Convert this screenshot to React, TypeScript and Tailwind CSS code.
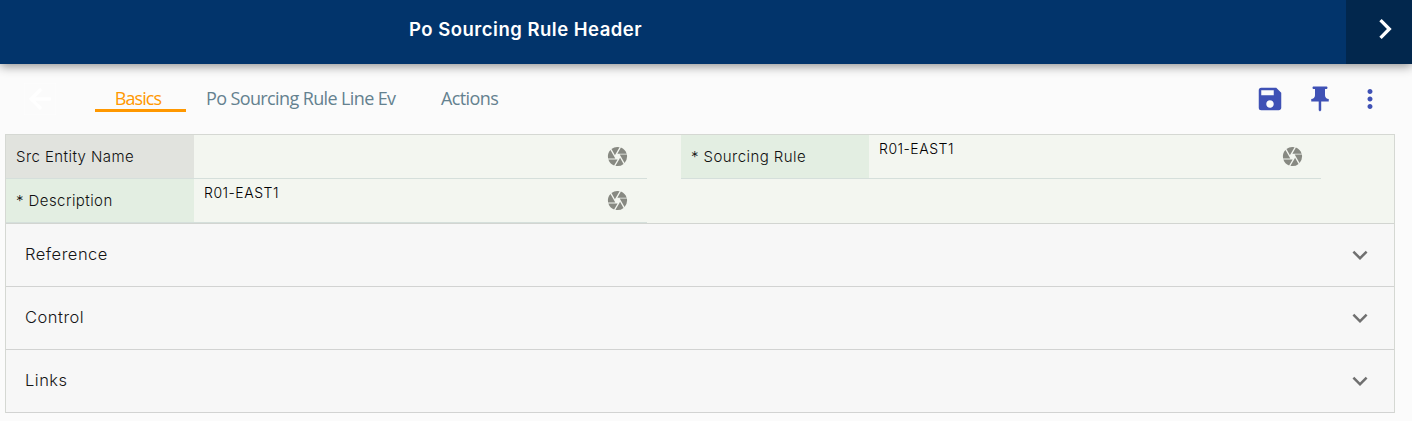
import { MdArrowBack, MdCamera, MdChevronRight, MdExpandMore, MdMoreVert, MdPushPin, MdSave } from "react-icons/md";

type FieldProps = { label: string; value?: string; muted?: boolean; width: string; iconInset?: string };

function Field({ label, value, muted, width, iconInset = "pr-[18px]" }: FieldProps) {
  return (
    <div className={`flex h-11 border-b border-[#d5dfdb] ${width}`}>
      <div
        className={`flex w-[188px] shrink-0 items-center pt-[2px] pl-[10px] text-[15px] font-light tracking-[0.43px] text-[#101010] ${
          muted ? "bg-[#e1e3de]" : "bg-[#e3eee2]"
        }`}
      >
        {label}
      </div>
      <div className={`flex flex-1 items-center justify-between pl-[10px] ${iconInset}`}>
        <span className="mb-4 text-[14px] font-[350] tracking-[0.5px] text-black">{value}</span>
        <MdCamera className="size-[23px] text-[#878982]" />
      </div>
    </div>
  );
}

function Section({ title }: { title: string }) {
  return (
    <div className="flex h-[63px] items-center justify-between border-b border-[#d2d3d2] bg-[#f7f7f7] pr-[19px] pl-[19px]">
      <span className="pb-[2px] text-[16.5px] font-light tracking-[0.5px] text-[#151515]">{title}</span>
      <MdExpandMore className="size-[30px] text-[#707070]" />
    </div>
  );
}

export default function App() {
  return (
    <div className="h-[421px] w-[1412px] overflow-hidden bg-[#fbfbfb] font-['Inter',sans-serif]">
      <header className="relative flex h-16 bg-[#02346b] shadow-[0_2px_10px_rgba(0,0,0,0.45)]">
        <h1 className="flex w-[1346px] items-center pb-[5px] pl-[409px] text-[18.5px] font-semibold tracking-[0.5px] text-white">
          Po Sourcing Rule Header
        </h1>
        <button className="flex w-[66px] items-center bg-[#02274d] pb-[6px] pl-[19px] text-white">
          <MdChevronRight className="size-[40px]" />
        </button>
      </header>
      <nav className="flex h-[70px] items-center font-['Open_Sans',sans-serif] text-[18px] tracking-[-0.6px] text-[#64818f]">
        <MdArrowBack className="ml-[24px] size-[32px] stroke-white stroke-[0.6] text-white" />
        <div className="mb-px ml-[39px] flex h-[27px] w-[91px] justify-center border-b-[3px] border-[#ff9800] leading-[26px] text-[#ff9800]">
          <span className="mr-[8px] ml-[3px] tracking-[-0.95px]">Basics</span>
        </div>
        <span className="mb-px ml-5 w-[235px] tracking-[-0.62px]">Po Sourcing Rule Line Ev</span>
        <span className="mb-px">Actions</span>
        <div className="mr-[27px] ml-auto flex gap-5 text-[#3f51b5]">
          <MdSave className="size-[30px]" />
          <MdPushPin className="size-[30px]" />
          <MdMoreVert className="size-[30px]" />
        </div>
      </nav>
      <main className="ml-[5px] w-[1390px] border-x border-t border-[#d5d8d3]">
        <div className="flex h-[89px] border-b border-[#d2d5d1] bg-[#f3f6f0]">
          <div className="w-[675px]">
            <Field label="Src Entity Name" muted width="w-[641px]" />
            <Field label="* Description" value="R01-EAST1" width="w-[641px]" />
          </div>
          <Field label="* Sourcing Rule" value="R01-EAST1" width="w-[640px]" iconInset="pr-[17px]" />
        </div>
        <Section title="Reference" />
        <Section title="Control" />
        <Section title="Links" />
      </main>
    </div>
  );
}
